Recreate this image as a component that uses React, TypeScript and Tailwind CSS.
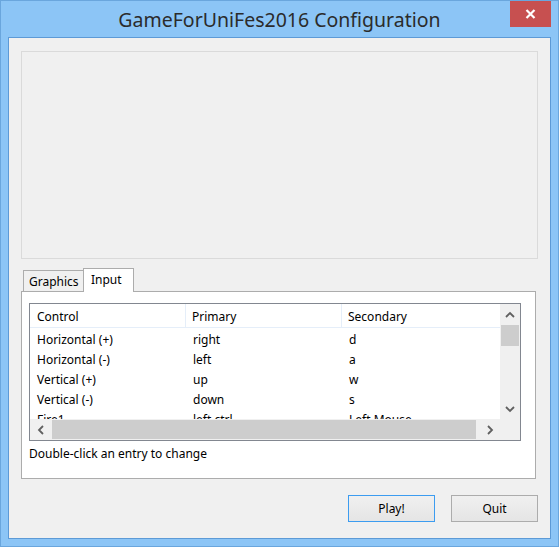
import React from "react";

const rows = [
  ["Horizontal (+)", "right", "d"],
  ["Horizontal (-)", "left", "a"],
  ["Vertical (+)", "up", "w"],
  ["Vertical (-)", "down", "s"],
  ["Fire1", "left ctrl", "Left Mouse"],
];

function Chevron({ dir }: { dir: "up" | "down" | "left" | "right" }) {
  const paths: Record<string, string> = {
    up: "M1 6 L5 2 L9 6",
    down: "M1 2 L5 6 L9 2",
    left: "M6 1 L2 5 L6 9",
    right: "M2 1 L6 5 L2 9",
  };
  const vertical = dir === "up" || dir === "down";
  return (
    <svg
      width={vertical ? 10 : 8}
      height={vertical ? 8 : 10}
      viewBox={vertical ? "0 0 10 8" : "0 0 8 10"}
      fill="none"
      stroke="#606060"
      strokeWidth="1.8"
    >
      <path d={paths[dir]} />
    </svg>
  );
}

export default function App() {
  return (
    <div
      className="w-[559px] h-[547px] bg-[#8cc5f6] border border-[#6aa6dd] flex flex-col overflow-hidden"
      style={{ fontFamily: '"Noto Sans", "Open Sans", sans-serif' }}
    >
      {/* Title bar */}
      <div className="h-[36px] shrink-0 relative flex items-center justify-center">
        <span className="text-[19.5px] text-[#2b2b2b] leading-none mt-[1px]">
          GameForUniFes2016 Configuration
        </span>
        <div className="absolute right-[7px] top-[-1px] w-[41px] h-[27px] bg-[#c75050] flex items-center justify-center">
          <svg width="11" height="10" viewBox="0 0 11 10">
            <path d="M1.5 1 L9.5 9 M9.5 1 L1.5 9" stroke="#fff" strokeWidth="2.2" />
          </svg>
        </div>
      </div>
      {/* Client */}
      <div className="mx-[7px] mb-[7px] flex-1 border border-[#5d9ad6] bg-[#f0f0f0] flex flex-col px-[12px] text-[12px] text-black">
        {/* Image panel */}
        <div className="mt-[13px] h-[208px] w-[517px] border border-[#dadada] bg-[#f0f0f0]" />
        {/* Tabs */}
        <div className="mt-[9px] flex items-end h-[23px] pl-[2px] relative z-10">
          <div className="h-[21px] w-[61px] border border-[#acacac] border-b-0 bg-[#f0f0f0] flex items-center pl-[5px] pt-[2px] leading-none">
            Graphics
          </div>
          <div className="h-[24px] w-[51px] -ml-[1px] border border-[#acacac] border-b-0 bg-white flex items-start pt-[5px] pl-[7px] leading-none -mb-[1px]">
            Input
          </div>
        </div>
        {/* Tab panel */}
        <div className="w-[515px] h-[188px] border border-[#acacac] bg-white flex flex-col px-[7px]">
          <div className="mt-[11px] w-[492px] h-[138px] border border-[#828790] flex flex-col">
            <div className="flex h-[115px]">
              {/* list content */}
              <div className="w-[470px] overflow-hidden">
                <div className="h-[24px] flex border-b border-[#e5eef9]">
                  <div className="w-[156px] pl-[7px] pt-[3px] flex items-center border-r border-[#e5eef9]">Control</div>
                  <div className="w-[156px] pl-[6px] pt-[3px] flex items-center border-r border-[#e5eef9]">Primary</div>
                  <div className="flex-1 pl-[6px] pt-[3px] flex items-center">Secondary</div>
                </div>
                {rows.map((r) => (
                  <div key={r[0]} className="h-[20px] flex items-center">
                    <div className="w-[156px] pl-[7px] whitespace-nowrap relative top-[2px]">{r[0]}</div>
                    <div className="w-[156px] pl-[7px] whitespace-nowrap relative top-[2px]">{r[1]}</div>
                    <div className="flex-1 pl-[7px] whitespace-nowrap relative top-[2px]">{r[2]}</div>
                  </div>
                ))}
              </div>
              {/* vertical scrollbar */}
              <div className="w-[20px] bg-[#f0f0f0] flex flex-col">
                <div className="h-[21px] flex items-center justify-center">
                  <Chevron dir="up" />
                </div>
                <div className="h-[21px] mx-[1px] bg-[#cdcdcd]" />
                <div className="flex-1" />
                <div className="h-[20px] flex items-center justify-center">
                  <Chevron dir="down" />
                </div>
              </div>
            </div>
            {/* horizontal scrollbar */}
            <div className="h-[21px] flex bg-[#f0f0f0]">
              <div className="w-[22px] flex items-center justify-center">
                <Chevron dir="left" />
              </div>
              <div className="w-[424px] my-[1px] bg-[#cdcdcd]" />
              <div className="flex-1" />
              <div className="w-[20px] flex items-center justify-center">
                <Chevron dir="right" />
              </div>
              <div className="w-[20px] bg-[#f0f0f0]" />
            </div>
          </div>
          <div className="mt-[7px] leading-none">Double-click an entry to change</div>
        </div>
        {/* Buttons */}
        <div className="mt-[16px] flex justify-end gap-[16px] pr-[0px]">
          <button className="w-[87px] h-[27px] border border-[#3c9cf0] bg-gradient-to-b from-[#f0f0f0] to-[#e5e5e5] text-[12px] leading-none">
            Play!
          </button>
          <button className="w-[87px] h-[27px] border border-[#acacac] bg-gradient-to-b from-[#f0f0f0] to-[#e5e5e5] text-[12px] leading-none">
            Quit
          </button>
        </div>
      </div>
    </div>
  );
}
